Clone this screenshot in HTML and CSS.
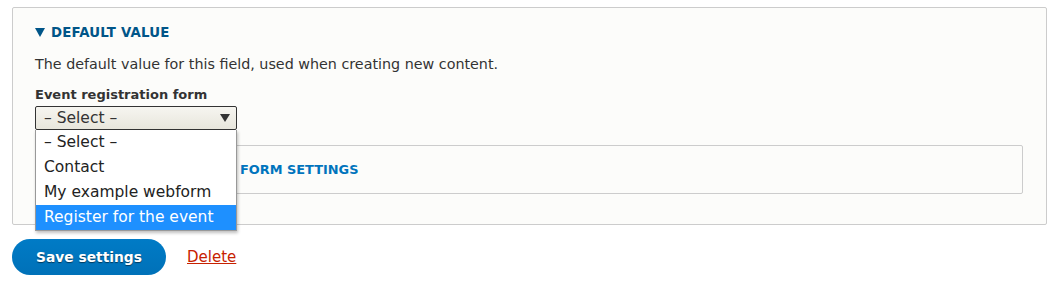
FILE: index.html
```html
<!DOCTYPE html>
<html>
<head>
<meta charset="utf-8">
<link rel="stylesheet" href="styles.css">
</head>
<body>
<div class="page">
  <div class="fieldset">
    <div class="legend"><span class="tri"></span>DEFAULT VALUE</div>
    <p class="desc">The default value for this field, used when creating new content.</p>
    <div class="field">
      <label class="label">Event registration form</label>
      <div class="selectwrap">
        <div class="select"><span>– Select –</span><span class="arrow"></span></div>
        <ul class="dropdown">
          <li>– Select –</li>
          <li>Contact</li>
          <li>My example webform</li>
          <li class="hl">Register for the event</li>
        </ul>
      </div>
    </div>
    <div class="details"><span class="dtext">FORM SETTINGS</span></div>
  </div>
  <div class="actions">
    <button class="btn">Save settings</button>
    <a class="delete" href="#">Delete</a>
  </div>
</div>
</body>
</html>
```
FILE: styles.css
```css
html, body { margin: 0; padding: 0; background: #fff; }
body { font-family: "DejaVu Sans", "Liberation Sans", sans-serif; color: #333; }
.page { padding: 7px 15px 0 12px; }
.fieldset {
  background: #fcfcfa;
  border: 1px solid #ccc;
  border-radius: 2px;
  padding: 16px 23px 30px 22px;
}
.legend {
  display: flex; align-items: center;
  color: #005588; font-weight: bold; font-size: 13.3px;
  letter-spacing: 0.2px; height: 16px;
}
.tri {
  width: 0; height: 0; margin-right: 6px;
  border-left: 5px solid transparent; border-right: 5px solid transparent;
  border-top: 9px solid #005588;
}
.desc { margin: 16px 0 0; font-size: 14.3px; line-height: 17px; color: #333; }
.field { margin-top: 14px; }
.label { display: block; font-weight: bold; font-size: 13px; line-height: 16px; color: #333; }
.selectwrap { position: relative; width: 202px; margin-top: 3px; }
.select {
  height: 22px; box-sizing: content-box;
  border: 1px solid #333; border-radius: 2px;
  background: linear-gradient(#f6f5f0, #e8e6dc);
  display: flex; align-items: center; justify-content: space-between;
  padding: 0 0 0 8px; font-size: 15.5px; color: #333;
}
.arrow {
  width: 0; height: 0; margin-right: 6px;
  border-left: 5px solid transparent; border-right: 5px solid transparent;
  border-top: 8px solid #333;
}
.dropdown {
  position: absolute; left: 0; top: 24px; z-index: 2;
  width: 200px; margin: 0; padding: 0; list-style: none;
  background: #fff; border: 1px solid #999; border-top: 0;
  box-shadow: 1px 2px 3px rgba(0,0,0,0.25);
}
.dropdown li {
  height: 25px; line-height: 25px; padding-left: 8px;
  font-size: 15.5px; color: #222;
}
.dropdown li.hl { background: #1e90ff; color: #fff; }
.details {
  margin-top: 15px; height: 47px;
  border: 1px solid #ccc; border-radius: 2px;
  display: flex; align-items: center; padding-left: 204px;
  color: #0074bd; font-weight: bold; font-size: 12.9px;
}
.actions { display: flex; align-items: center; margin-top: 14px; }
.btn {
  width: 154px; height: 36px; border: 0; border-radius: 20px;
  color: #fff;
  font-family: "DejaVu Sans", sans-serif; font-weight: bold; font-size: 13.8px;
  text-shadow: 0 1px 1px rgba(0,0,0,0.5);
  background: linear-gradient(#007bc6, #0071b8);
}
.delete { margin-left: 21px; color: #c72100; font-size: 15px; text-decoration: underline; }
```
